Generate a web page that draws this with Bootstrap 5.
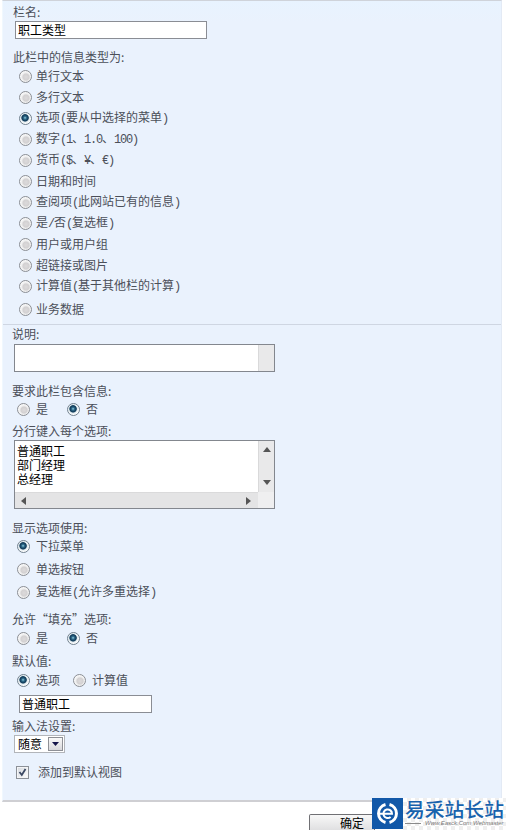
<!DOCTYPE html>
<html lang="zh-CN">
<head>
<meta charset="utf-8">
<meta name="viewport" content="width=device-width, initial-scale=1">
<title>创建栏</title>
<link rel="stylesheet" href="https://cdn.jsdelivr.net/npm/bootstrap@5.3.0/dist/css/bootstrap.min.css">
<style>
body{font:12px/16px "Noto Sans CJK SC",sans-serif;color:#4b4f59;background:#fff;width:506px;height:830px}
.panel{width:500px;height:802px;margin-left:2px;background:#eaf2fd;border-top:1px solid #cfd3da;border-bottom:2px solid #cfcfd3;border-left:1px solid #f0f8fe;border-right:1px solid #e3eaf5}
.upper{height:324px;padding:3px 0 0 10px;border-bottom:1px solid #cfd6e2;background:linear-gradient(#e8f3ff,#eaf2fd 20px)}
.lower{padding:1px 0 0 9px}
.title{height:16px;line-height:16px}
.lt{font-family:"Liberation Mono",monospace;letter-spacing:-1.2px}
.opt{height:21px;line-height:16px;white-space:nowrap}
.upper .opt{padding-left:6px;gap:4px}
.lower .opt{padding-left:5px;gap:6px}
.opt .form-check-input{width:13px;height:13px;margin:2px 0 0;border:1px solid #8b8e94;background:radial-gradient(circle at 55% 55%,#dcdadb 0,#d3d1d2 35%,#eee 50%,#fafafa 70%);box-shadow:none;flex:none}
.opt .form-check-input:checked{border-color:#71818f;background:radial-gradient(circle at 46% 44%,#a6dcea 0,#347393 14%,#123d5c 34%,#1d4764 39%,#dfe9ee 48%,#fff 68%)}
.field{background:#fff;border:1px solid #8a8d94;border-radius:0;color:#000;font-size:12px;line-height:15px;padding:0 2px 1px;outline:0}
.name-in{width:193px;height:18px;margin:2px 0 0 2px}
.default-in{width:133px;height:18px;margin:5px 0 0 7px}
.area{width:261px;margin-left:2px;border:1px solid #83878e;background:#fff;color:#000}
.track{width:16px;background:#e9e9ea;border-left:1px solid #d9d9da;flex:none}
.hbar{height:16px;background:#e4e4e5;border-top:1px solid #dadadb}
.corner{width:16px;background:#efeff0}
.lines div{line-height:14px;height:14px}
.pick{width:51px;height:18px;margin:1px 0 0 2px;border:1px solid #b2b5ba;background:#fff;color:#000;padding:0 1px 0 3px}
.drop{width:15px;height:14px;border:1px solid #8e9096;background:linear-gradient(#fafafa,#d8d8dc)}
.tick{width:13px;height:13px;border:1px solid #8c9198;background:linear-gradient(135deg,#d4d8de,#fff);box-shadow:inset 0 0 0 1px #f4f5f7}
.foot{height:28px;padding-left:309px}
.ok{width:66px;height:17px;margin-top:12px;border:1px solid #707074;border-bottom:0;border-radius:2px 0 0 0;background:linear-gradient(#f8f8f8,#dedee0);color:#000;font-size:12px;line-height:16px;padding:0 0 0 30px}
.brand{left:372px;top:798px;width:134px;height:32px}
.emblem{width:31px;height:31px;background:#1258a8;flex:none}
.checks{background-color:#fff;background-image:repeating-conic-gradient(#efefef 0 25%,#fff 0 50%);background-size:8px 8px;width:103px;height:32px}
.brand-name{font-size:19.8px;line-height:23px;height:23px;margin-top:-1px;font-weight:500;color:#1762ad;padding-left:2px;white-space:nowrap}
.brand-url{font:italic 6px/7px "Liberation Sans",sans-serif;color:#777;padding-left:2px;white-space:nowrap}
.rule{width:16px;height:1px;background:#8b8b8b;flex:none}
</style>
<script src="https://cdn.jsdelivr.net/npm/bootstrap@5.3.0/dist/js/bootstrap.bundle.min.js"></script>
</head>
<body class="m-0 overflow-hidden position-relative">
<form>
<main class="panel">
<section class="upper">
<div class="title">栏名:</div>
<input class="field name-in d-block" style="margin-top:1px;width:192px" value="职工类型" aria-label="栏名">
<div class="title" style="margin-top:10px">此栏中的信息类型为:</div>
<label class="opt d-flex align-items-center"><input type="radio" name="kind" class="form-check-input"><span>单行文本</span></label>
<label class="opt d-flex align-items-center"><input type="radio" name="kind" class="form-check-input"><span>多行文本</span></label>
<label class="opt d-flex align-items-center"><input type="radio" name="kind" class="form-check-input" checked><span>选项<span class="lt">(</span>要从中选择的菜单<span class="lt">)</span></span></label>
<label class="opt d-flex align-items-center"><input type="radio" name="kind" class="form-check-input"><span>数字<span class="lt">(1</span>、<span class="lt">1.0</span>、<span class="lt">100)</span></span></label>
<label class="opt d-flex align-items-center"><input type="radio" name="kind" class="form-check-input"><span>货币<span class="lt">($</span>、<span class="lt">¥</span>、<span class="lt">€)</span></span></label>
<label class="opt d-flex align-items-center"><input type="radio" name="kind" class="form-check-input"><span>日期和时间</span></label>
<label class="opt d-flex align-items-center"><input type="radio" name="kind" class="form-check-input"><span>查阅项<span class="lt">(</span>此网站已有的信息<span class="lt">)</span></span></label>
<label class="opt d-flex align-items-center"><input type="radio" name="kind" class="form-check-input"><span>是<span class="lt">/</span>否<span class="lt">(</span>复选框<span class="lt">)</span></span></label>
<label class="opt d-flex align-items-center"><input type="radio" name="kind" class="form-check-input"><span>用户或用户组</span></label>
<label class="opt d-flex align-items-center"><input type="radio" name="kind" class="form-check-input"><span>超链接或图片</span></label>
<label class="opt d-flex align-items-center"><input type="radio" name="kind" class="form-check-input"><span>计算值<span class="lt">(</span>基于其他栏的计算<span class="lt">)</span></span></label>
<label class="opt d-flex align-items-center" style="margin-top:2px"><input type="radio" name="kind" class="form-check-input"><span>业务数据</span></label>
</section>
<section class="lower">
<div class="title">说明:</div>
<div class="area d-flex justify-content-end" style="height:28px;margin-top:2px"><div class="track"></div></div>
<div class="title" style="margin-top:11px">要求此栏包含信息:</div>
<div class="d-flex" style="margin-top:-1px">
<label class="opt d-flex align-items-center" style="width:50px"><input type="radio" name="req" class="form-check-input"><span>是</span></label>
<label class="opt d-flex align-items-center"><input type="radio" name="req" class="form-check-input" checked><span>否</span></label>
</div>
<div class="title" style="margin-top:4px">分行键入每个选项:</div>
<div class="area d-flex flex-column" style="height:69px;margin-top:1px">
<div class="d-flex flex-grow-1">
<div class="lines flex-grow-1" style="padding:3px 0 0 2px"><div>普通职工</div><div>部门经理</div><div>总经理</div></div>
<div class="track d-flex flex-column align-items-center justify-content-between" style="padding:6px 0 7px"><svg width="8" height="5"><path d="M0 5L4 0L8 5Z" fill="#555"/></svg><svg width="8" height="5"><path d="M0 0L4 5L8 0Z" fill="#555"/></svg></div>
</div>
<div class="d-flex"><div class="hbar flex-grow-1 d-flex justify-content-between align-items-center" style="padding:0 7px 0 6px"><svg width="5" height="8"><path d="M5 0L0 4L5 8Z" fill="#555"/></svg><svg width="5" height="8"><path d="M0 0L5 4L0 8Z" fill="#555"/></svg></div><div class="corner"></div></div>
</div>
<div class="title" style="margin-top:11px">显示选项使用:</div>
<label class="opt d-flex align-items-center" style="margin-top:-1px"><input type="radio" name="show" class="form-check-input" checked><span>下拉菜单</span></label>
<label class="opt d-flex align-items-center" style="margin-top:2px"><input type="radio" name="show" class="form-check-input"><span>单选按钮</span></label>
<label class="opt d-flex align-items-center" style="margin-top:2px"><input type="radio" name="show" class="form-check-input"><span>复选框<span class="lt">(</span>允许多重选择<span class="lt">)</span></span></label>
<div class="title" style="margin-top:9px">允许<span class="q">“</span>填充<span class="q">”</span>选项:</div>
<div class="d-flex">
<label class="opt d-flex align-items-center" style="width:50px"><input type="radio" name="fill" class="form-check-input"><span>是</span></label>
<label class="opt d-flex align-items-center"><input type="radio" name="fill" class="form-check-input" checked><span>否</span></label>
</div>
<div class="title" style="margin-top:5px">默认值:</div>
<div class="d-flex">
<label class="opt d-flex align-items-center" style="width:56px"><input type="radio" name="def" class="form-check-input" checked><span>选项</span></label>
<label class="opt d-flex align-items-center"><input type="radio" name="def" class="form-check-input"><span>计算值</span></label>
</div>
<input class="field default-in d-block" value="普通职工" aria-label="默认值">
<div class="title" style="margin-top:5px">输入法设置:</div>
<div class="pick d-flex align-items-center justify-content-between"><span>随意</span><span class="drop d-flex align-items-center justify-content-center"><svg width="7" height="4"><path d="M0 0H7L3.5 4Z" fill="#15154a"/></svg></span></div>
<div class="d-flex align-items-center" style="margin:11px 0 0 4px;gap:9px"><span class="tick d-flex align-items-center justify-content-center"><svg width="9" height="9"><path d="M1.5 4L3.8 7L7.5 1" fill="none" stroke="#3b4863" stroke-width="1.8"/></svg></span><span>添加到默认视图</span></div>
</section>
</main>
<div class="foot"><button type="button" class="ok d-block text-start">确定</button></div>
</form>
<div class="brand position-absolute d-flex">
<div class="emblem"><svg width="31" height="31" fill="none"><path d="M13.5 6.5A9.3 9.3 0 0 0 13.5 24.5M17.5 6.5A9.3 9.3 0 0 1 17.5 24.5" stroke="#fff" stroke-width="3"/><path d="M7 15.8H20A4.3 4.3 0 1 0 18.6 18.9" stroke="#fff" stroke-width="2"/></svg></div>
<div class="checks"><div class="brand-name">易采站长站</div><div class="brand-url d-flex align-items-center gap-1"><span class="rule"></span><span>Www.Easck.Com Webmaster</span></div></div>
</div>
</body>
</html>
